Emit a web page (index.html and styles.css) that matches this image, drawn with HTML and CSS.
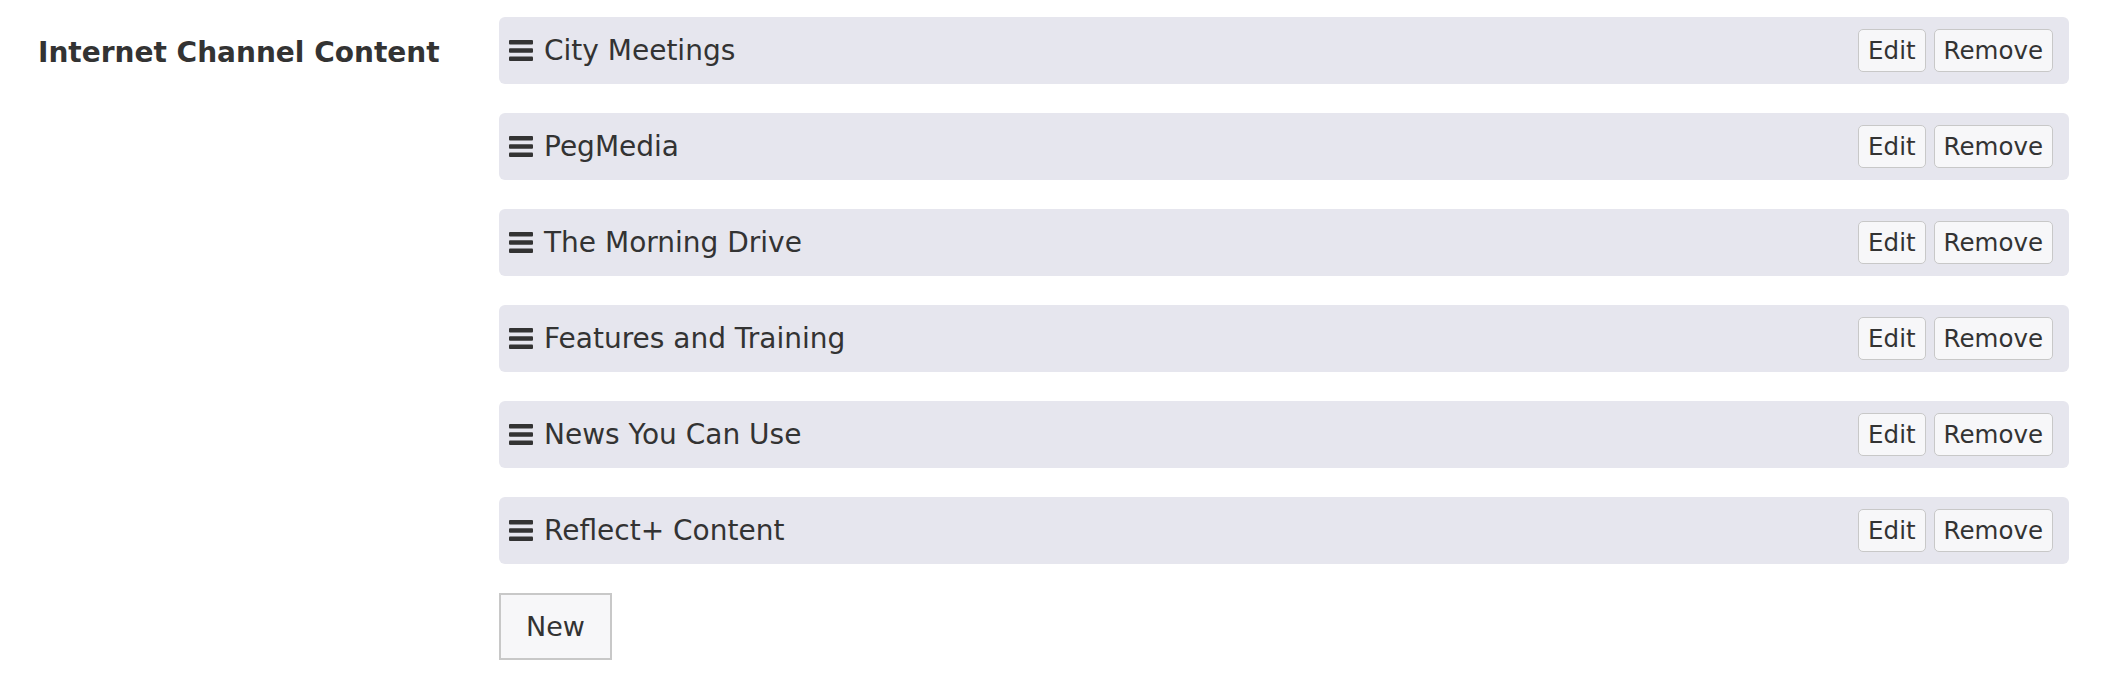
FILE: index.html
```html
<!DOCTYPE html>
<html>
<head>
<meta charset="utf-8">
<link rel="stylesheet" href="styles.css">
</head>
<body>
<div class="field">
  <div class="field-label">Internet Channel Content</div>
  <div class="field-body">
    <ul class="items">
      <li class="item">
        <svg class="handle" viewBox="0 0 24 21" width="24" height="21"><rect x="0" y="0" width="24" height="4.5" rx="1"/><rect x="0" y="8.25" width="24" height="4.5" rx="1"/><rect x="0" y="16.5" width="24" height="4.5" rx="1"/></svg>
        <span class="item-title">City Meetings</span>
        <div class="actions"><button class="btn">Edit</button><button class="btn">Remove</button></div>
      </li>
      <li class="item">
        <svg class="handle" viewBox="0 0 24 21" width="24" height="21"><rect x="0" y="0" width="24" height="4.5" rx="1"/><rect x="0" y="8.25" width="24" height="4.5" rx="1"/><rect x="0" y="16.5" width="24" height="4.5" rx="1"/></svg>
        <span class="item-title">PegMedia</span>
        <div class="actions"><button class="btn">Edit</button><button class="btn">Remove</button></div>
      </li>
      <li class="item">
        <svg class="handle" viewBox="0 0 24 21" width="24" height="21"><rect x="0" y="0" width="24" height="4.5" rx="1"/><rect x="0" y="8.25" width="24" height="4.5" rx="1"/><rect x="0" y="16.5" width="24" height="4.5" rx="1"/></svg>
        <span class="item-title">The Morning Drive</span>
        <div class="actions"><button class="btn">Edit</button><button class="btn">Remove</button></div>
      </li>
      <li class="item">
        <svg class="handle" viewBox="0 0 24 21" width="24" height="21"><rect x="0" y="0" width="24" height="4.5" rx="1"/><rect x="0" y="8.25" width="24" height="4.5" rx="1"/><rect x="0" y="16.5" width="24" height="4.5" rx="1"/></svg>
        <span class="item-title">Features and Training</span>
        <div class="actions"><button class="btn">Edit</button><button class="btn">Remove</button></div>
      </li>
      <li class="item">
        <svg class="handle" viewBox="0 0 24 21" width="24" height="21"><rect x="0" y="0" width="24" height="4.5" rx="1"/><rect x="0" y="8.25" width="24" height="4.5" rx="1"/><rect x="0" y="16.5" width="24" height="4.5" rx="1"/></svg>
        <span class="item-title">News You Can Use</span>
        <div class="actions"><button class="btn">Edit</button><button class="btn">Remove</button></div>
      </li>
      <li class="item">
        <svg class="handle" viewBox="0 0 24 21" width="24" height="21"><rect x="0" y="0" width="24" height="4.5" rx="1"/><rect x="0" y="8.25" width="24" height="4.5" rx="1"/><rect x="0" y="16.5" width="24" height="4.5" rx="1"/></svg>
        <span class="item-title">Reflect+ Content</span>
        <div class="actions"><button class="btn">Edit</button><button class="btn">Remove</button></div>
      </li>
    </ul>
    <button class="btn-new">New</button>
  </div>
</div>
</body>
</html>
```
FILE: styles.css
```css
html, body {
  margin: 0;
  padding: 0;
  background: #ffffff;
}
body {
  font-family: "DejaVu Sans", sans-serif;
  color: #333333;
}
.field {
  display: flex;
  align-items: flex-start;
  padding-top: 17px;
}
.field-label {
  width: 461px;
  padding-left: 38px;
  padding-top: 19px;
  font-size: 28px;
  font-weight: bold;
  line-height: normal;
  box-sizing: content-box;
  flex: none;
}
.field-body {
  width: 1570px;
  display: flex;
  flex-direction: column;
  align-items: flex-start;
}
.items {
  list-style: none;
  margin: 0;
  padding: 0;
  width: 100%;
  display: flex;
  flex-direction: column;
  gap: 29px;
}
.item {
  display: flex;
  align-items: center;
  background: #e6e6ee;
  border-radius: 6px;
  padding: 12px 16px 12px 10px;
  height: 67px;
  box-sizing: border-box;
}
.handle {
  fill: #333333;
  flex: none;
  margin-right: 11px;
  margin-top: -1px;
}
.item-title {
  font-size: 28px;
  flex: 1;
  margin-top: -1px;
}
.actions {
  display: flex;
  gap: 8px;
}
.btn {
  font-family: "DejaVu Sans", sans-serif;
  font-size: 24.5px;
  color: #333333;
  background: #f7f7f9;
  border: 1.5px solid #c8c8c8;
  border-radius: 5px;
  height: 43px;
  padding: 0 9px;
}
.btn-new {
  margin-top: 29px;
  font-family: "DejaVu Sans", sans-serif;
  font-size: 27px;
  color: #333333;
  background: #f7f7f9;
  border: 2px solid #c8c8c8;
  border-radius: 0;
  width: 113px;
  height: 67px;
  padding: 0;
}
```
